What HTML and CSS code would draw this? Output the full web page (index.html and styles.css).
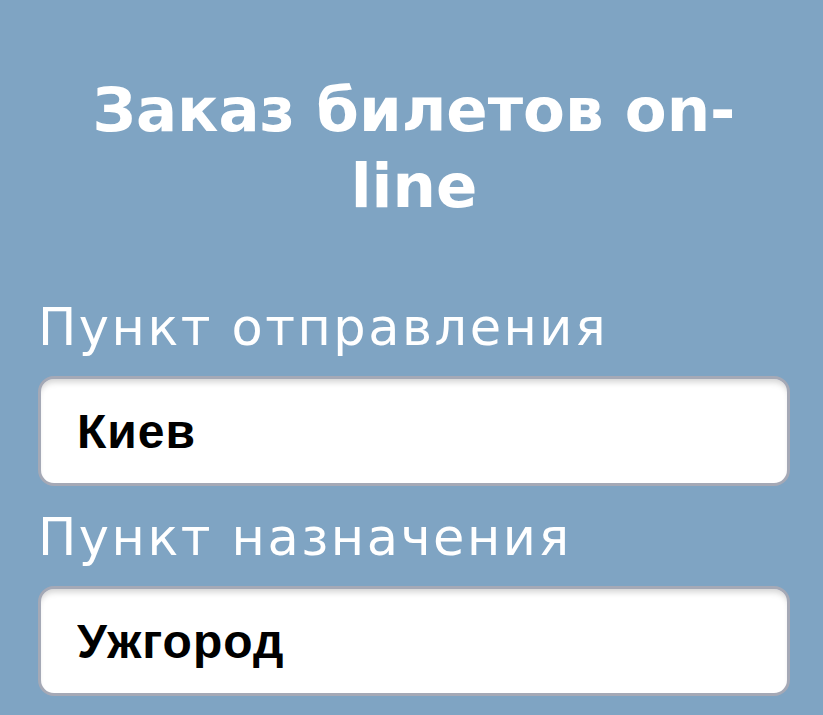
FILE: index.html
```html
<!DOCTYPE html>
<html lang="ru">
<head>
    <meta charset="UTF-8">
    <meta name="viewport" content="width=device-width, initial-scale=1.0">
    <title>Заказ билетов on-line</title>
    <link rel="stylesheet" href="styles.css">
</head>
<body>
<form id="ticketForm" class="ticket-form">
    <h1>Заказ билетов on-line</h1>

    <label for="from">Пункт отправления</label>
    <input type="text" id="from" value="Киев" autocomplete="off">

    <label for="to">Пункт назначения</label>
    <input type="text" id="to" value="Ужгород" autocomplete="off">
</form>
</body>
</html>
```

FILE: styles.css
```css
html, body {
    margin: 0;
    padding: 0;
    background-color: #7fa4c3;
}

.ticket-form {
    display: flex;
    flex-direction: column;
    padding: 72px 33px 0 38px;
}

h1 {
    margin: 0 0 74px;
    font-family: "DejaVu Sans", Verdana, sans-serif;
    font-weight: bold;
    font-size: 61px;
    line-height: 76px;
    color: #fff;
    text-align: center;
}

label {
    margin: 0 0 18px;
    font-family: "DejaVu Sans", Verdana, sans-serif;
    font-weight: normal;
    font-size: 51px;
    line-height: 60px;
    letter-spacing: 2.5px;
    color: #fff;
}

input[type="text"] {
    height: 110px;
    margin: 0 0 22px;
    padding: 0 36px;
    box-sizing: border-box;
    border: 3px solid #a5a9b6;
    border-radius: 16px;
    background-color: #fff;
    box-shadow: inset 0 6px 6px -3px rgba(0, 0, 0, 0.18);
    font-family: "Liberation Sans", Arial, sans-serif;
    font-weight: bold;
    font-size: 48px;
    letter-spacing: 1px;
    color: #000;
    outline: none;
}
```
